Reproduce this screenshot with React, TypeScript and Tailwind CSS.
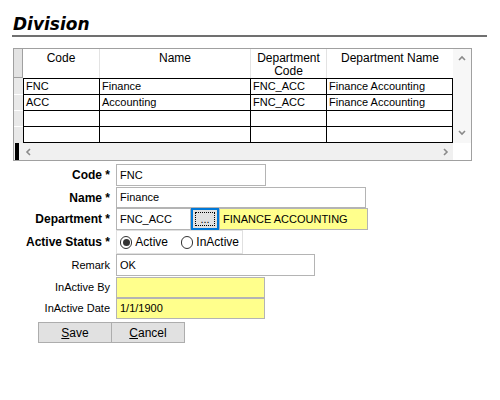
import React from 'react'

const rows = [
  { code: 'FNC', name: 'Finance', deptCode: 'FNC_ACC', deptName: 'Finance Accounting' },
  { code: 'ACC', name: 'Accounting', deptCode: 'FNC_ACC', deptName: 'Finance Accounting' },
  { code: '', name: '', deptCode: '', deptName: '' },
  { code: '', name: '', deptCode: '', deptName: '' },
]

const Chevron = ({ dir }: { dir: 'up' | 'down' | 'left' | 'right' }) => {
  const d = {
    up: 'M1 5 L4 2 L7 5',
    down: 'M1 2 L4 5 L7 2',
    left: 'M5 1 L2 4 L5 7',
    right: 'M2 1 L5 4 L2 7',
  }[dir]
  return (
    <svg width="8" height="8" viewBox="0 0 8 8">
      <path d={d} fill="none" stroke="#8a8a8a" strokeWidth="1.6" />
    </svg>
  )
}

const Label = ({ children, bold }: { children: React.ReactNode; bold?: boolean }) => (
  <div
    className={`w-[111px] shrink-0 text-right pr-[1px] text-black ${
      bold ? 'font-bold text-[12px]' : 'text-[11px]'
    }`}
  >
    {children}
  </div>
)

const Field = ({ value, w, yellow }: { value: string; w: string; yellow?: boolean }) => (
  <div
    className={`${w} h-full border border-[#b4b4b4] flex items-center px-[3px] text-[11px] text-black ${
      yellow ? 'bg-[#ffff8c]' : 'bg-white'
    }`}
  >
    {value}
  </div>
)

export default function App() {
  return (
    <div className="w-[500px] h-[400px] bg-white font-['Liberation_Sans',Arial,sans-serif] text-black overflow-hidden">
      {/* title */}
      <div className="ml-[12px] mt-[14px] w-[475px] h-[23px] border-b-2 border-[#707070]">
        <div className="pl-[1px] h-[21px] leading-[20px] text-[17px] font-bold italic font-['DejaVu_Sans',Verdana,sans-serif]">
          Division
        </div>
      </div>

      {/* grid */}
      <div className="ml-[13px] mt-[11px] w-[459px] h-[113px] border border-[#a0a0a0] flex flex-col">
        <div className="flex h-[94px]">
          <div className="flex flex-col w-[439px]">
            {/* header */}
            <div className="flex h-[29px]">
              <div className="w-[9px] bg-[#e3e3e3] border-r border-b border-[#a0a0a0]" />
              <div className="w-[76px] text-center text-[12px] leading-[13px] pt-[3px]">Code</div>
              <div className="w-[151px] border-l border-[#e3e3e3] text-center text-[12px] leading-[13px] pt-[3px]">
                Name
              </div>
              <div className="w-[76px] border-l border-[#e3e3e3] text-center text-[12px] leading-[13px] pt-[3px]">
                Department
                <br />
                Code
              </div>
              <div className="w-[127px] border-l border-[#e3e3e3] text-center text-[12px] leading-[13px] pt-[3px]">
                Department Name
              </div>
            </div>
            {/* rows */}
            {rows.map((r, i) => (
              <div key={i} className={`flex ${i === rows.length - 1 ? 'h-[17px]' : 'h-[16px]'}`}>
                <div className={`w-[9px] bg-[#e9e9e9] ${i > 0 ? 'border-t border-white' : ''}`} />
                <div
                  className={`w-[76px] border-l border-t border-black px-[2px] text-[11px] leading-[15px] ${
                    i === rows.length - 1 ? 'border-b' : ''
                  }`}
                >
                  {r.code}
                </div>
                <div
                  className={`w-[151px] border-l border-t border-black px-[2px] text-[11px] leading-[15px] ${
                    i === rows.length - 1 ? 'border-b' : ''
                  }`}
                >
                  {r.name}
                </div>
                <div
                  className={`w-[76px] border-l border-t border-black px-[2px] text-[11px] leading-[15px] ${
                    i === rows.length - 1 ? 'border-b' : ''
                  }`}
                >
                  {r.deptCode}
                </div>
                <div
                  className={`w-[127px] border-x border-t border-black px-[2px] text-[11px] leading-[15px] ${
                    i === rows.length - 1 ? 'border-b' : ''
                  }`}
                >
                  {r.deptName}
                </div>
              </div>
            ))}
          </div>
          {/* vertical scrollbar */}
          <div className="w-[18px] bg-[#f7f7f7] flex flex-col items-center justify-between py-[6px]">
            <Chevron dir="up" />
            <Chevron dir="down" />
          </div>
        </div>
        {/* horizontal scrollbar */}
        <div className="flex h-[17px]">
          <div className="w-[439px] bg-[#f0f0f0] flex items-center">
            <div className="w-[4px] h-full bg-black ml-[1px]" />
            <div className="ml-[6px] flex items-center">
              <Chevron dir="left" />
            </div>
            <div className="ml-auto mr-[3px] flex items-center">
              <Chevron dir="right" />
            </div>
          </div>
          <div className="w-[18px] bg-white" />
        </div>
      </div>

      {/* form */}
      <div className="mt-[3px] flex flex-col">
        <div className="flex items-center h-[22px] gap-[5px]">
          <Label bold>Code *</Label>
          <Field value="FNC" w="w-[150px]" />
        </div>
        <div className="flex items-center h-[21px] gap-[5px] mt-[1px]">
          <Label bold>Name *</Label>
          <Field value="Finance" w="w-[250px]" />
        </div>
        <div className="flex items-center h-[22px] gap-[5px]">
          <Label bold>Department *</Label>
          <div className="flex h-full">
            <Field value="FNC_ACC" w="w-[75px]" />
            <button className="w-[28px] h-full border-2 border-[#0078d7] bg-[#e1e1e1] p-[2px]">
              <div className="w-full h-full border border-dotted border-black flex items-end justify-center text-[11px] leading-[12px]">
                ...
              </div>
            </button>
            <Field value="FINANCE ACCOUNTING" w="w-[149px]" yellow />
          </div>
        </div>
        <div className="flex items-center h-[24px] gap-[5px]">
          <Label bold>Active Status *</Label>
          <div className="w-[127px] h-full border border-[#e0e0e0] flex items-center px-[3px] text-[12px]">
            <span className="w-[13px] h-[13px] rounded-full border border-[#333] flex items-center justify-center">
              <span className="w-[7px] h-[7px] rounded-full bg-[#333]" />
            </span>
            <span className="ml-[3px]">Active</span>
            <span className="ml-[13px] w-[13px] h-[13px] rounded-full border border-[#333]" />
            <span className="ml-[3px]">InActive</span>
          </div>
        </div>
        <div className="flex items-center h-[22px] gap-[5px]">
          <Label>Remark</Label>
          <Field value="OK" w="w-[199px]" />
        </div>
        <div className="flex items-center h-[21px] gap-[5px] mt-[1px]">
          <Label>InActive By</Label>
          <Field value="" w="w-[149px]" yellow />
        </div>
        <div className="flex items-center h-[21px] gap-[5px]">
          <Label>InActive Date</Label>
          <Field value="1/1/1900" w="w-[149px]" yellow />
        </div>
        <div className="flex ml-[38px] mt-[3px] h-[21px]">
          <button className="w-[74px] h-full bg-[#e1e1e1] border border-[#adadad] text-[12px]">
            <span className="underline">S</span>ave
          </button>
          <button className="w-[73px] h-full bg-[#e1e1e1] border border-l-0 border-[#adadad] text-[12px]">
            <span className="underline">C</span>ancel
          </button>
        </div>
      </div>
    </div>
  )
}
